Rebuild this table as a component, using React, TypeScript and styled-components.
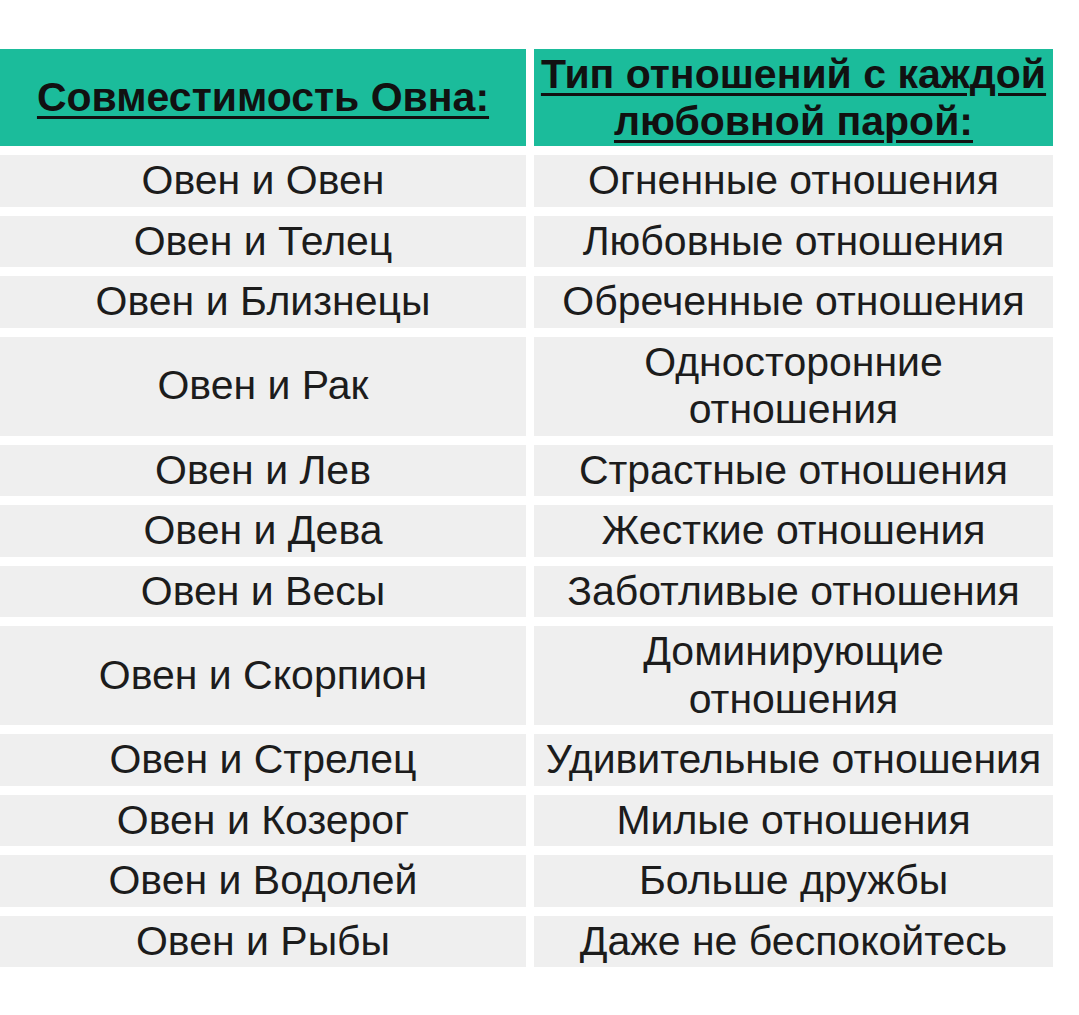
import React from "react";
import styled, { createGlobalStyle } from "styled-components";

const GlobalStyle = createGlobalStyle`
  html, body {
    margin: 0;
    padding: 0;
    background: #ffffff;
  }
  body {
    font-family: "Liberation Sans", Arial, sans-serif;
  }
`;

const Page = styled.div`
  width: 1079px;
  min-height: 1015px;
  padding-top: 49px;
  box-sizing: border-box;
  background: #ffffff;
`;

const Table = styled.div`
  display: grid;
  grid-template-columns: 526px 519px;
  column-gap: 8px;
  row-gap: 9px;
`;

const HeaderCell = styled.div`
  background: #1bbc9b;
  height: 97px;
  display: flex;
  align-items: center;
  justify-content: center;
  text-align: center;
  box-sizing: border-box;
  padding: 0;
`;

const HeaderText = styled.span`
  font-family: "Liberation Sans", Arial, sans-serif;
  font-weight: 700;
  font-size: 41px;
  line-height: 47px;
  color: #111111;
  white-space: nowrap;
  text-decoration: underline;
  text-decoration-thickness: 3px;
  text-underline-offset: 5px;
`;

const Cell = styled.div`
  background: #efefef;
  display: flex;
  align-items: center;
  justify-content: center;
  text-align: center;
  padding: 2px 0;
  box-sizing: border-box;
  font-size: 41px;
  line-height: 47.5px;
  color: #1c1c1c;
  white-space: pre-line;
`;

const rows: [string, string][] = [
  ["Овен и Овен", "Огненные отношения"],
  ["Овен и Телец", "Любовные отношения"],
  ["Овен и Близнецы", "Обреченные отношения"],
  ["Овен и Рак", "Односторонние\nотношения"],
  ["Овен и Лев", "Страстные отношения"],
  ["Овен и Дева", "Жесткие отношения"],
  ["Овен и Весы", "Заботливые отношения"],
  ["Овен и Скорпион", "Доминирующие\nотношения"],
  ["Овен и Стрелец", "Удивительные отношения"],
  ["Овен и Козерог", "Милые отношения"],
  ["Овен и Водолей", "Больше дружбы"],
  ["Овен и Рыбы", "Даже не беспокойтесь"],
];

export default function App() {
  return (
    <Page>
      <GlobalStyle />
      <Table>
        <HeaderCell>
          <HeaderText>Совместимость Овна:</HeaderText>
        </HeaderCell>
        <HeaderCell>
          <HeaderText>
            Тип отношений с каждой
            <br />
            любовной парой:
          </HeaderText>
        </HeaderCell>
        {rows.map(([a, b]) => (
          <React.Fragment key={a}>
            <Cell>{a}</Cell>
            <Cell>{b}</Cell>
          </React.Fragment>
        ))}
      </Table>
    </Page>
  );
}
